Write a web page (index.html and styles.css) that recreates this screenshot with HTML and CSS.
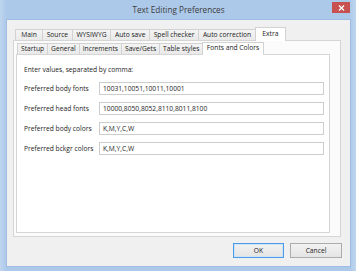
FILE: index.html
```html
<!DOCTYPE html>
<html>
<head>
<meta charset="utf-8">
<link rel="stylesheet" href="styles.css">
</head>
<body>
<div class="window">
  <div class="titlebar">
    <span class="spacer"></span>
    <span class="title">Text Editing Preferences</span>
    <span class="close"><svg width="7" height="6" viewBox="0 0 7 6"><path d="M1 0.5 L6 5.5 M6 0.5 L1 5.5" stroke="#fff" stroke-width="1.3" fill="none"/></svg></span>
  </div>
  <div class="client">
    <div class="tabs outer-tabs">
      <div class="tab">Main</div>
      <div class="tab">Source</div>
      <div class="tab">WYSIWYG</div>
      <div class="tab">Auto save</div>
      <div class="tab">Spell checker</div>
      <div class="tab">Auto correction</div>
      <div class="tab sel">Extra</div>
    </div>
    <div class="panel outer-panel">
      <div class="tabs inner-tabs">
        <div class="tab">Startup</div>
        <div class="tab">General</div>
        <div class="tab">Increments</div>
        <div class="tab">Save/Gets</div>
        <div class="tab">Table styles</div>
        <div class="tab sel">Fonts and Colors</div>
      </div>
      <div class="panel inner-panel">
        <div class="hint">Enter values, separated by comma:</div>
        <div class="form">
          <div class="row"><span class="label">Preferred body fonts</span><span class="input">10031,10051,10011,10001</span></div>
          <div class="row"><span class="label">Preferred head fonts</span><span class="input">10000,8050,8052,8110,8011,8100</span></div>
          <div class="row"><span class="label">Preferred body colors</span><span class="input">K,M,Y,C,W</span></div>
          <div class="row"><span class="label">Preferred bckgr colors</span><span class="input">K,M,Y,C,W</span></div>
        </div>
      </div>
    </div>
    <div class="buttons">
      <button class="btn default">OK</button>
      <button class="btn">Cancel</button>
    </div>
  </div>
</div>
</body>
</html>
```
FILE: styles.css
```css
* { box-sizing: border-box; }
html, body { margin: 0; padding: 0; background: #b3cdeb; }
body { font-family: "Segoe UI", "Open Sans", sans-serif; color: #1c1c1c; }

.window {
  width: 356px;
  height: 271px;
  background: linear-gradient(90deg, #c0d6ef 0, #adc9ea 6px, #adc9ea 350px, #c0d6ef 356px);
  padding: 0 6px 5px 7px;
  display: flex;
  flex-direction: column;
}

.titlebar {
  height: 20px;
  display: grid;
  grid-template-columns: 1fr auto 1fr;
  align-items: start;
}
.title {
  font-size: 8.2px;
  line-height: 20px;
  color: #3c3c3c;
  white-space: nowrap;
}
.close {
  justify-self: end;
  margin-top: 2px;
  width: 18px;
  height: 11px;
  background: #c75050;
  display: flex;
  align-items: center;
  justify-content: center;
}
.close svg { display: block; }

.client {
  flex: 1;
  background: #f0f0f0;
  padding: 7px 9px 0 6px;
  display: flex;
  flex-direction: column;
  box-shadow: 0 0 0 1px #9fbde3;
}

.tabs {
  display: flex;
  align-items: flex-end;
  height: 14px;
  margin-bottom: -1px;
  position: relative;
  z-index: 1;
}
.outer-tabs { padding-left: 2px; }
.inner-tabs { padding-left: 1px; height: 13px; }

.tab {
  height: 11px;
  margin-bottom: 1px;
  padding: 0 3.65px;
  min-width: 28px;
  text-align: center;
  font-size: 6.7px;
  line-height: 10px;
  white-space: nowrap;
  color: #1a1a1a;
  border: 1px solid #d2d2d2;
  border-bottom: none;
  margin-left: -1px;
  background: linear-gradient(#f4f4f4, #e9e9e9);
}
.tab:first-child { margin-left: 0; }
.inner-tabs .tab { padding: 0 3px; }
.tab.sel {
  height: 14px;
  margin-bottom: 0;
  background: #fff;
  padding: 1px 6.5px 0;
  border-color: #d2d2d2;
}
.inner-tabs .tab.sel { height: 13px; padding: 0 3.5px; }

.panel { border: 1px solid #d5d5d5; }

.outer-panel {
  flex: 1;
  background: #fbfbfb;
  padding: 1px 10px 3px 2px;
  display: flex;
  flex-direction: column;
}

.inner-panel {
  flex: 1;
  background: #fff;
  padding: 10px 5px 0 7px;
}

.hint {
  font-size: 6.7px;
  line-height: 10px;
  white-space: nowrap;
}

.form {
  margin-top: 7px;
  display: flex;
  flex-direction: column;
  gap: 7px;
}
.row {
  display: grid;
  grid-template-columns: 75px 1fr;
  align-items: center;
  height: 13px;
}
.label {
  font-size: 6.7px;
  line-height: 10px;
  white-space: nowrap;
}
.input {
  height: 13px;
  border: 1px solid #cdcdcd;
  background: #fff;
  font-size: 6.7px;
  line-height: 11px;
  padding-left: 3px;
  white-space: nowrap;
}

.buttons {
  display: flex;
  justify-content: flex-end;
  gap: 6px;
  margin: 6px -1px 8px 0;
  height: 15px;
}
.btn {
  width: 51px;
  height: 15px;
  padding: 0;
  font-family: inherit;
  font-size: 6.7px;
  color: #222;
  border: 1px solid #acacac;
  background: linear-gradient(#f2f2f2, #e4e4e4);
}
.btn + .btn { width: 52px; }
.btn.default { border-color: #4d9ae6; box-shadow: inset 0 0 0 1px #cfe3f7; }
```
